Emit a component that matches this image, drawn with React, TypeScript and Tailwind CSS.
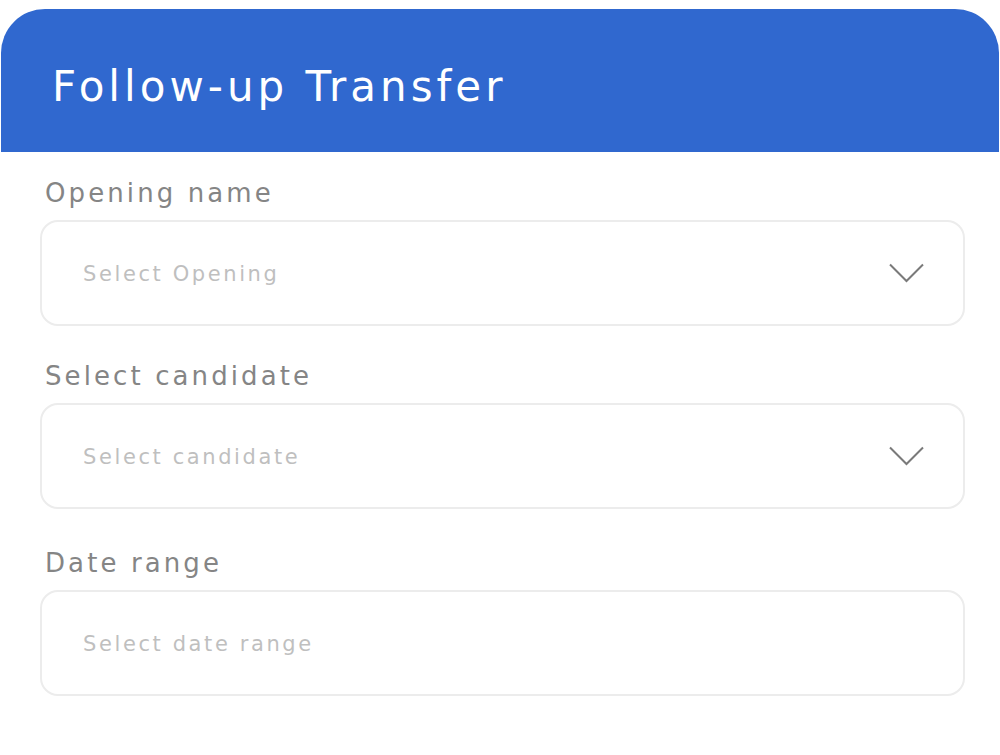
import React from 'react';

interface Field { label: string; placeholder: string; select: boolean; gap: string; }

const FIELDS: Field[] = [
  { label: 'Opening name', placeholder: 'Select Opening', select: true, gap: 'mb-[30px]' },
  { label: 'Select candidate', placeholder: 'Select candidate', select: true, gap: 'mb-[34px]' },
  { label: 'Date range', placeholder: 'Select date range', select: false, gap: 'mb-0' },
];

function Chevron() {
  return (
    <svg width="35" height="20" viewBox="0 0 35 20" fill="none" className="shrink-0">
      <polyline points="1,1.5 17.5,18 34,1.5" stroke="#7a7a7a" strokeWidth="2" strokeLinejoin="miter" />
    </svg>
  );
}

export default function App() {
  return (
    <div className="w-[1000px] h-[755px] bg-white pt-[9px] px-px" style={{ fontFamily: '"DejaVu Sans", "Open Sans", sans-serif' }}>
      <div className="h-[143px] bg-[#3068cf] rounded-t-[44px] flex items-center pl-[51px] pt-[11px]">
        <h1 className="text-white text-[42px] tracking-[4px] font-normal">Follow-up Transfer</h1>
      </div>
      <div className="pl-[39px] pr-[34px] pt-[21px] flex flex-col">
        {FIELDS.map((f) => (
          <div key={f.label} className={f.gap}>
            <div className="pl-[5px] text-[26px] leading-[40px] tracking-[3.1px] text-[#858585] mb-[7px]">{f.label}</div>
            <div className="h-[106px] border-2 border-[#ececec] rounded-[18px] flex items-center justify-between pl-[41px] pr-[39px]">
              <span className="text-[21px] tracking-[2.6px] text-[#bfbfbf] pt-[3px]">{f.placeholder}</span>
              {f.select && <Chevron />}
            </div>
          </div>
        ))}
      </div>
    </div>
  );
}
